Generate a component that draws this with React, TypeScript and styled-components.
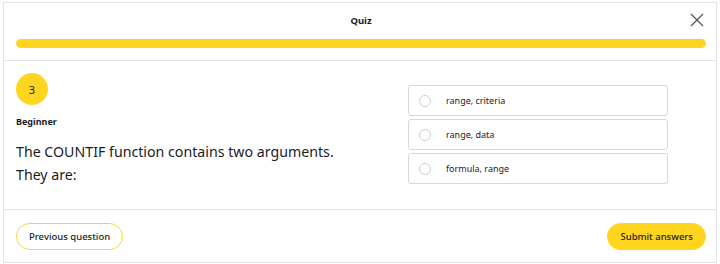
import * as React from 'react'
import styled, { createGlobalStyle } from 'styled-components'

const YELLOW = '#FFD520'
const BORDER = '#E1E5EA'
const TEXT = '#1B1B1F'
const FONT = '"Noto Sans", "Open Sans", sans-serif'

const GlobalStyle = createGlobalStyle`
  html, body {
    margin: 0;
    padding: 0;
    background: #fff;
  }
  body {
    font-family: ${FONT};
    color: ${TEXT};
  }
`

const OPTIONS = ['range, criteria', 'range, data', 'formula, range']

function CloseIcon () {
  return (
    <svg width='14' height='14' viewBox='0 0 14 14'>
      <path d='M1 1 L13 13 M13 1 L1 13' stroke='#555' strokeWidth='1.3' fill='none' />
    </svg>
  )
}

export default function App () {
  return (
    <Page>
      <GlobalStyle />
      <Card>
        <Header>
          <TitleRow>
            <Title>Quiz</Title>
            <CloseButton><CloseIcon /></CloseButton>
          </TitleRow>
          <Progress><ProgressFill style={{ width: '100%' }} /></Progress>
        </Header>
        <Body>
          <QuestionCol>
            <Badge>3</Badge>
            <Level>Beginner</Level>
            <Question>The COUNTIF function contains two arguments. They are:</Question>
          </QuestionCol>
          <OptionsCol>
            {OPTIONS.map(o => (
              <Option key={o}>
                <Radio />
                <OptionLabel>{o}</OptionLabel>
              </Option>
            ))}
          </OptionsCol>
        </Body>
        <Footer>
          <Button>Previous question</Button>
          <Button primary>Submit answers</Button>
        </Footer>
      </Card>
    </Page>
  )
}

const Page = styled.div`
  padding: 2px 3px 0 3px;
  width: 720px;
  box-sizing: border-box;
`

const Card = styled.div`
  width: 714px;
  height: 261px;
  box-sizing: border-box;
  border: 1px solid ${BORDER};
  display: flex;
  flex-direction: column;
`

const Header = styled.div`
  height: 58px;
  box-sizing: border-box;
  border-bottom: 1px solid ${BORDER};
  padding: 8px 10px 0 12px;
`

const TitleRow = styled.div`
  position: relative;
  height: 18px;
  display: flex;
  align-items: center;
  justify-content: center;
`

const Title = styled.div`
  font-size: 9.5px;
  font-weight: 700;
`

const CloseButton = styled.div`
  position: absolute;
  right: 2px;
  top: 2px;
  display: flex;
`

const Progress = styled.div`
  margin-top: 10px;
  height: 9px;
  border-radius: 5px;
  background: #f0f0f0;
  overflow: hidden;
`

const ProgressFill = styled.div`
  height: 100%;
  background: ${YELLOW};
  border-radius: 5px;
`

const Body = styled.div`
  flex: 1;
  display: flex;
  padding: 12px 48px 0 12px;
  border-bottom: 1px solid ${BORDER};
`

const QuestionCol = styled.div`
  width: 345px;
`

const Badge = styled.div`
  width: 32px;
  height: 32px;
  border-radius: 50%;
  background: ${YELLOW};
  display: flex;
  align-items: center;
  justify-content: center;
  font-size: 11px;
`

const Level = styled.div`
  margin-top: 10px;
  font-size: 9px;
  font-weight: 700;
`

const Question = styled.div`
  margin-top: 12px;
  font-size: 14.2px;
  line-height: 23px;
`

const OptionsCol = styled.div`
  margin-left: auto;
  width: 260px;
  padding-top: 12px;
  display: flex;
  flex-direction: column;
  gap: 3px;
`

const Option = styled.div`
  height: 31px;
  box-sizing: border-box;
  border: 1px solid #D3D8DE;
  border-radius: 3px;
  display: flex;
  align-items: center;
  padding-left: 10px;
`

const Radio = styled.div`
  width: 12px;
  height: 12px;
  box-sizing: border-box;
  border: 1px solid #C9CED4;
  border-radius: 50%;
`

const OptionLabel = styled.div`
  margin-left: 15px;
  font-size: 9px;
`

const Footer = styled.div`
  height: 52px;
  display: flex;
  align-items: center;
  justify-content: space-between;
  padding: 0 10px 0 12px;
`

const Button = styled.button<{ primary?: boolean }>`
  height: 27px;
  padding: 0 12px;
  border-radius: 14px;
  border: 1px solid ${YELLOW};
  background: ${p => p.primary ? YELLOW : '#fff'};
  font-family: ${FONT};
  font-size: 9.5px;
  font-weight: 500;
  color: ${TEXT};
`
